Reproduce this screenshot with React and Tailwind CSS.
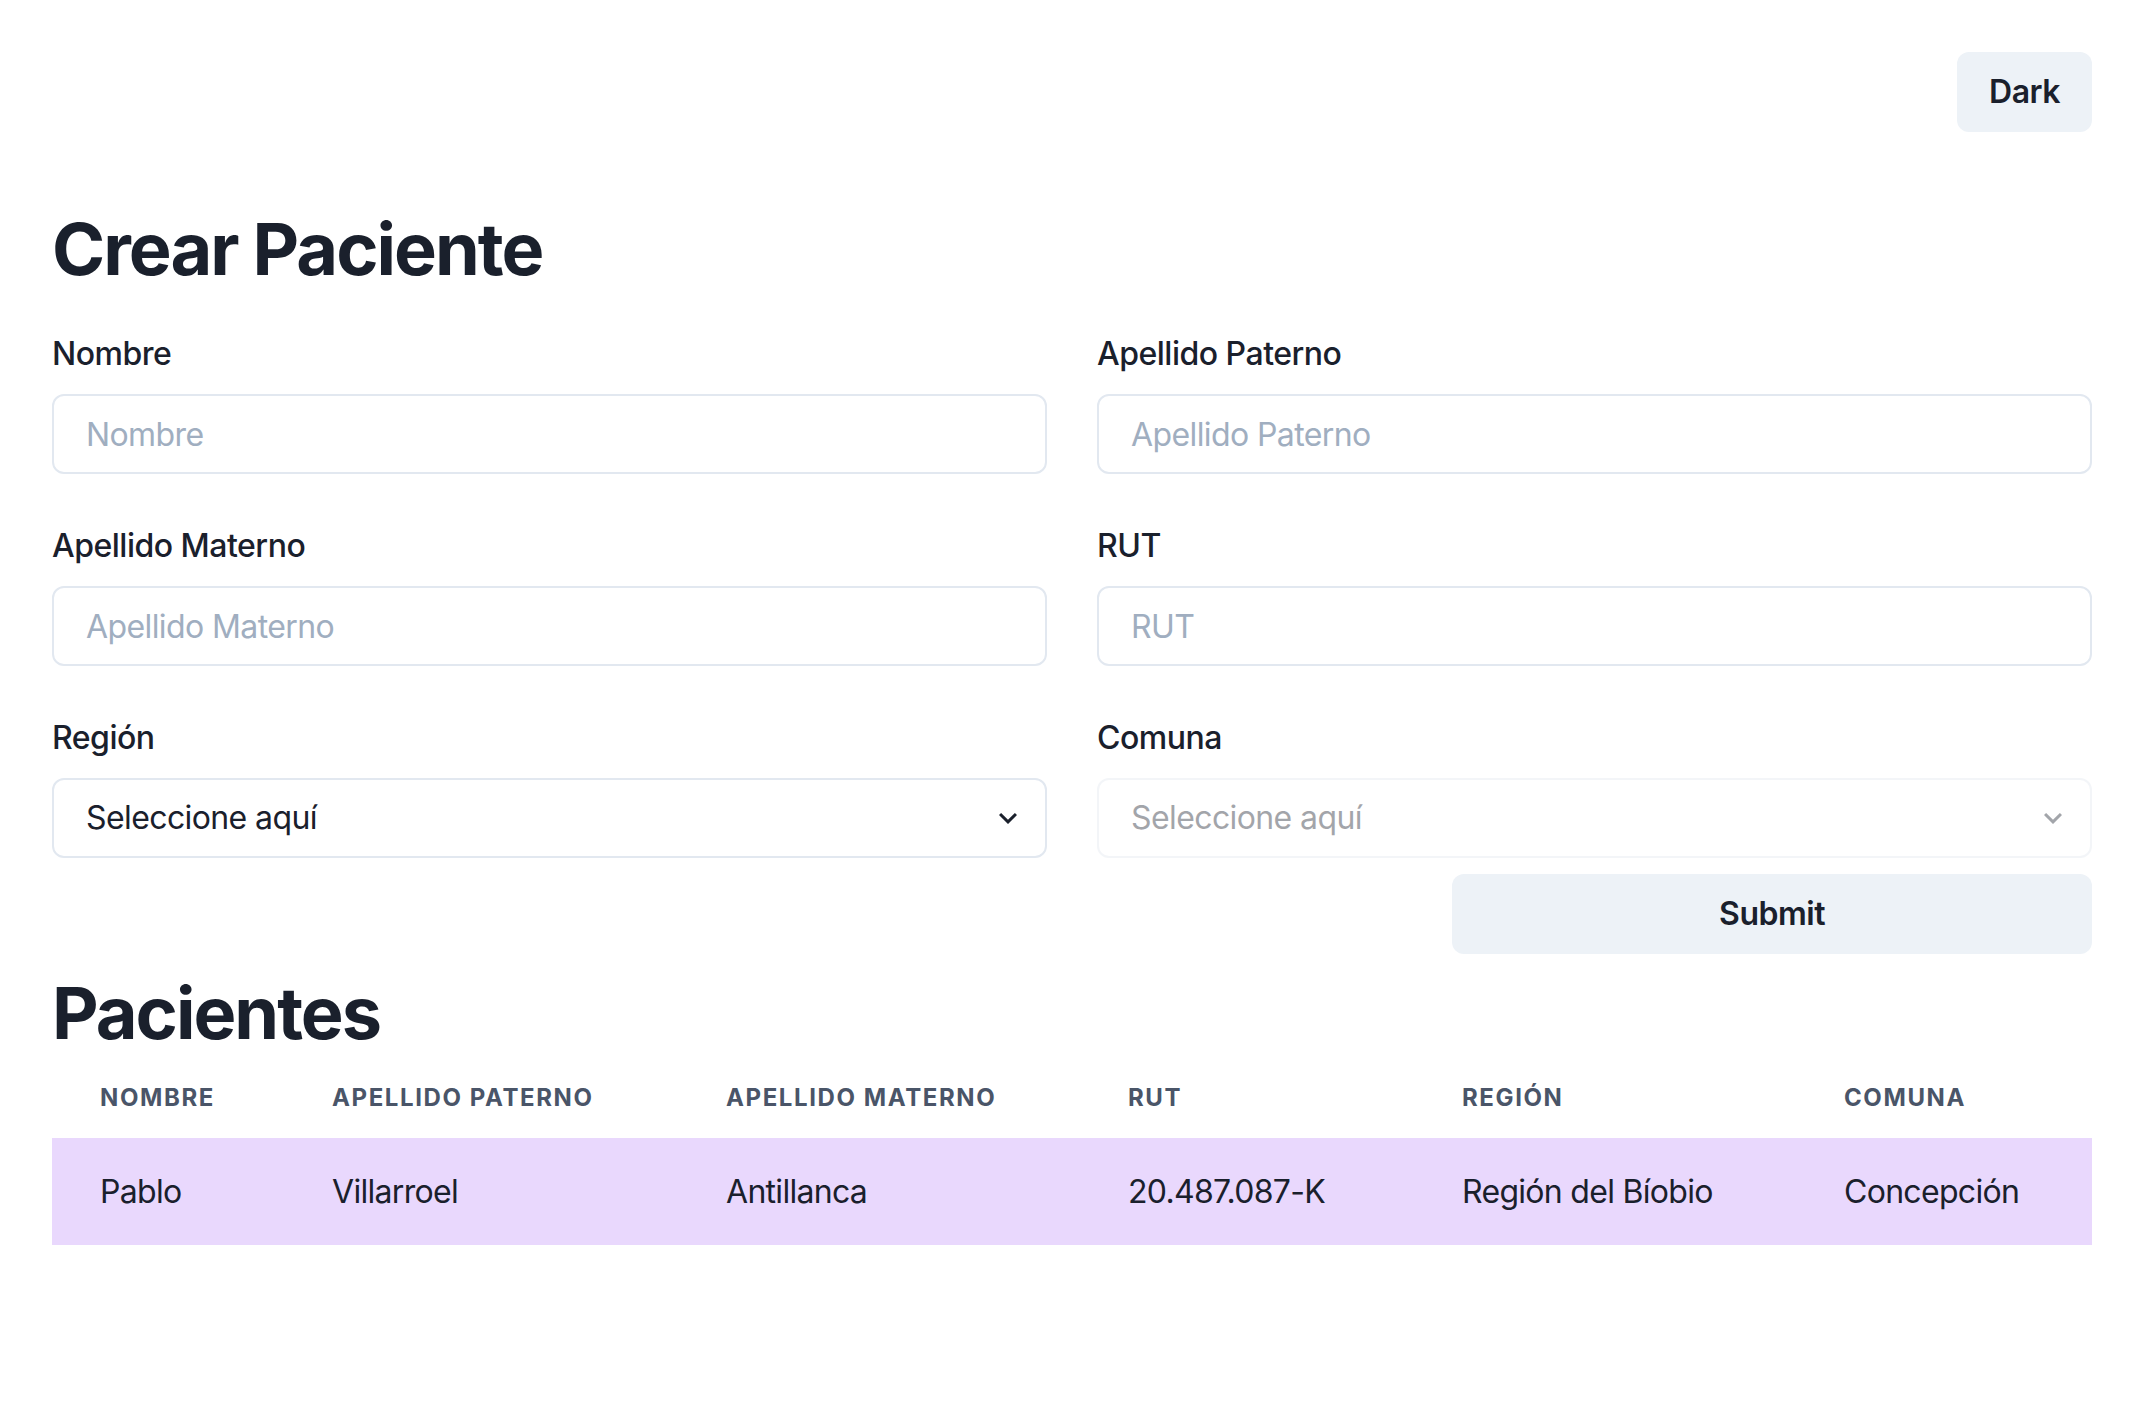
import React from 'react';

const rows = [
  [
    { label: 'Nombre', placeholder: 'Nombre' },
    { label: 'Apellido Paterno', placeholder: 'Apellido Paterno' },
  ],
  [
    { label: 'Apellido Materno', placeholder: 'Apellido Materno' },
    { label: 'RUT', placeholder: 'RUT' },
  ],
];

const pacientes = [
  {
    nombre: 'Pablo',
    paterno: 'Villarroel',
    materno: 'Antillanca',
    rut: '20.487.087-K',
    region: 'Región del Bíobio',
    comuna: 'Concepción',
  },
];

const ChevronDown = () => (
  <svg viewBox="0 0 24 24" className="w-[36px] h-[36px]" fill="currentColor">
    <path d="M16.59 8.59L12 13.17 7.41 8.59 6 10l6 6 6-6z" />
  </svg>
);

const Field = ({ label, placeholder }) => (
  <div className="flex flex-col">
    <label className="text-[32px] leading-[48px] font-medium tracking-[-0.5px] text-[#1a202c] mb-4">{label}</label>
    <input
      type="text"
      placeholder={placeholder}
      className="h-[80px] w-full rounded-[12px] border-2 border-[#e2e8f0] bg-white px-8 text-[32px] tracking-[-0.6px] text-[#1a202c] placeholder:text-[#a0aec0] outline-none"
    />
  </div>
);

const SelectField = ({ label, disabled }) => (
  <div className="flex flex-col">
    <label className="text-[32px] leading-[48px] font-medium tracking-[-0.5px] text-[#1a202c] mb-4">{label}</label>
    <div className={disabled ? 'relative opacity-40' : 'relative'}>
      <select
        disabled={disabled}
        defaultValue=""
        className="h-[80px] w-full appearance-none rounded-[12px] border-2 border-[#e2e8f0] bg-white pl-8 pr-20 text-[32px] tracking-[-0.6px] text-[#1a202c] outline-none"
      >
        <option value="">Seleccione aquí</option>
      </select>
      <div className="pointer-events-none absolute right-[21px] top-0 bottom-0 flex items-center text-[#1a202c]">
        <ChevronDown />
      </div>
    </div>
  </div>
);

const thClass =
  'px-12 py-6 text-left text-[24px] leading-[32px] font-bold uppercase tracking-[1.6px] text-[#4a5568]';
const tdClass = 'px-12 py-8 text-[32px] leading-[43px] tracking-[-0.7px] whitespace-nowrap';

const App = () => {
  return (
    <div className="min-h-screen bg-white px-[52px] pt-[52px] pb-20 font-['Inter','Noto_Sans',sans-serif] text-[#1a202c]">
      <div className="flex justify-end">
        <button className="h-[80px] rounded-[12px] bg-[#edf2f7] px-8 text-[32px] font-semibold tracking-[-0.5px] text-[#1a202c]">
          Dark
        </button>
      </div>

      <h1 className="mt-[74px] mb-[38px] text-[72px] leading-[86px] font-bold tracking-[-2px]">Crear Paciente</h1>

      <div className="flex flex-col gap-12">
        {rows.map((row, i) => (
          <div key={i} className="grid grid-cols-2 gap-[50px]">
            {row.map((f) => (
              <Field key={f.label} label={f.label} placeholder={f.placeholder} />
            ))}
          </div>
        ))}
        <div className="grid grid-cols-2 gap-[50px]">
          <SelectField label="Región" />
          <SelectField label="Comuna" disabled />
        </div>
      </div>

      <div className="flex justify-end mt-4">
        <button className="h-[80px] w-[640px] rounded-[12px] bg-[#edf2f7] text-[32px] font-semibold tracking-[-0.5px] text-[#1a202c]">
          Submit
        </button>
      </div>

      <h2 className="mt-4 text-[72px] leading-[86px] font-bold tracking-[-2px]">Pacientes</h2>

      <table className="w-full table-fixed border-collapse mt-[2px]">
        <thead>
          <tr>
            <th className={`w-[232px] ${thClass}`}>Nombre</th>
            <th className={`w-[394px] ${thClass}`}>Apellido Paterno</th>
            <th className={`w-[402px] ${thClass}`}>Apellido Materno</th>
            <th className={`w-[334px] ${thClass}`}>RUT</th>
            <th className={`w-[382px] ${thClass}`}>Región</th>
            <th className={thClass}>Comuna</th>
          </tr>
        </thead>
        <tbody>
          {pacientes.map((p) => (
            <tr key={p.rut} className="bg-[#e9d8fd]">
              <td className={tdClass}>{p.nombre}</td>
              <td className={tdClass}>{p.paterno}</td>
              <td className={tdClass}>{p.materno}</td>
              <td className={tdClass}>{p.rut}</td>
              <td className={tdClass}>{p.region}</td>
              <td className={tdClass}>{p.comuna}</td>
            </tr>
          ))}
        </tbody>
      </table>
    </div>
  );
};

export default App;
